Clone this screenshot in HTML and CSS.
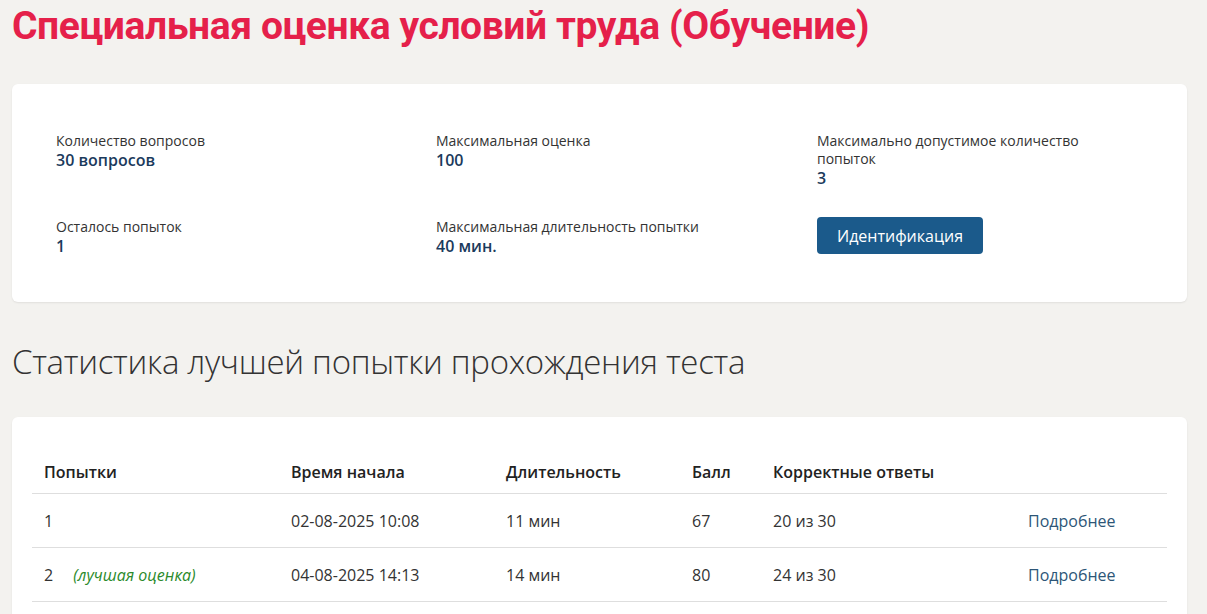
FILE: index.html
```html
<!DOCTYPE html>
<html lang="ru">
<head>
    <meta charset="UTF-8">
    <meta name="viewport" content="width=device-width, initial-scale=1.0">
    <title>Специальная оценка условий труда</title>
    <link rel="stylesheet" href="styles.css">
</head>
<body>
    <h1 class="title">Специальная оценка условий труда (Обучение)</h1>

    <section class="card info">
        <div class="info-item">
            <span class="label">Количество вопросов</span>
            <span class="value">30 вопросов</span>
        </div>
        <div class="info-item">
            <span class="label">Максимальная оценка</span>
            <span class="value">100</span>
        </div>
        <div class="info-item">
            <span class="label">Максимально допустимое количество попыток</span>
            <span class="value">3</span>
        </div>
        <div class="info-item">
            <span class="label">Осталось попыток</span>
            <span class="value">1</span>
        </div>
        <div class="info-item">
            <span class="label">Максимальная длительность попытки</span>
            <span class="value">40 мин.</span>
        </div>
        <div class="info-item">
            <button class="btn">Идентификация</button>
        </div>
    </section>

    <h2 class="subtitle">Статистика лучшей попытки прохождения теста</h2>

    <section class="card stats">
        <table>
            <thead>
                <tr>
                    <th class="c1">Попытки</th>
                    <th class="c2">Время начала</th>
                    <th class="c3">Длительность</th>
                    <th class="c4">Балл</th>
                    <th class="c5">Корректные ответы</th>
                    <th></th>
                </tr>
            </thead>
            <tbody>
                <tr>
                    <td>1</td>
                    <td>02-08-2025 10:08</td>
                    <td>11 мин</td>
                    <td>67</td>
                    <td>20 из 30</td>
                    <td><a href="#">Подробнее</a></td>
                </tr>
                <tr>
                    <td>2 <em class="best">(лучшая оценка)</em></td>
                    <td>04-08-2025 14:13</td>
                    <td>14 мин</td>
                    <td>80</td>
                    <td>24 из 30</td>
                    <td><a href="#">Подробнее</a></td>
                </tr>
            </tbody>
        </table>
    </section>
</body>
</html>
```

FILE: styles.css
```css
body {
    margin:0;
    padding:0 20px 0 12px;
    background:#f3f2ef;
    font-family:"Open Sans", "Noto Sans", sans-serif;
    color:#222;
}
.title {
    margin:0;
    padding-top:6px;
    font-family:Roboto, "DejaVu Sans", sans-serif;
    font-weight:bold;
    font-size:39px;
    line-height:40px;
    letter-spacing:-0.4px;
    color:#e5204a;
}
.card {
    background:#fff;
    border-radius:6px;
    box-shadow:0 1px 2px rgba(0,0,0,0.08);
}
.info {
    margin-top:38px;
    padding:48px 44px 45px 44px;
    display:grid;
    grid-template-columns:380px 381px 300px;
    row-gap:29px;
}
.info-item {
    display:flex; flex-direction:column;
}
.label {
    font-size:14px; line-height:18px;
    color:#333;
}
.value {
    font-size:16px; line-height:21px;
    font-weight:600;
    color:#1b3a5c;
}
.btn {
    align-self:flex-start;
    margin-top:-1px;
    height:37px; padding:0 20px;
    border:none; border-radius:4px;
    background:#1b5a8b; color:#fff;
    font-family:inherit; font-size:16px;
}
.subtitle {
    margin:40px 0 0 0;
    font-family:"Open Sans", sans-serif;
    font-weight:300;
    font-size:33px;
    line-height:40px;
    color:#333;
    letter-spacing:-0.3px;
}
.stats {
    margin-top:35px;
    padding:44px 20px 20px 20px;
}
table {
    width:100%;
    border-collapse:collapse;
    font-size:16px;
}
th, td {
    text-align:left;
    padding:0 12px;
    border-bottom:1px solid #dedede;
}
th {
    font-weight:600;
    height:32px;
    vertical-align:top;
}
td {
    height:53px;
    color:#333;
}
.c1 {width:223px;}
.c2 {width:191px;}
.c3 {width:162px;}
.c4 {width:57px;}
.c5 {width:231px;}
.best {
    margin-left:16px;
    color:#2b8a2b;
}
td a {
    color:#2d5677;
    text-decoration:none;
}
```
